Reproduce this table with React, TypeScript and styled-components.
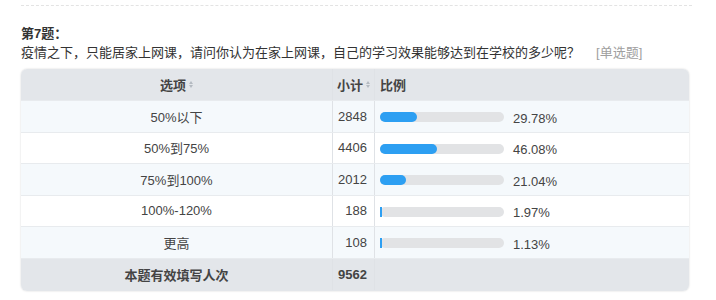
import React from "react";
import styled, { createGlobalStyle } from "styled-components";

const GlobalStyle = createGlobalStyle`
  body {
    margin: 0;
    background: #fff;
    font-family: "Liberation Sans", "Noto Sans CJK SC", sans-serif;
    color: #333;
  }
`;

const Page = styled.div`
  width: 716px;
  height: 300px;
  padding: 0 27px 0 21px;
  box-sizing: border-box;
  overflow: hidden;
`;

const Divider = styled.div`
  margin-top: 5px;
  width: 671px;
  border-top: 1px dashed #e3e3e3;
`;

const Title = styled.div`
  margin-top: 19px;
  font-size: 13px;
  font-weight: bold;
  line-height: 18px;
  color: #333;
`;

const Question = styled.div`
  font-size: 13px;
  line-height: 20px;
  color: #333;
  margin-bottom: 6px;
`;

const Kind = styled.span`
  margin-left: 16px;
  color: #a0a0a0;
`;

const Table = styled.div`
  width: 668px;
  border-radius: 6px;
  overflow: hidden;
  box-shadow: 0 0 2px rgba(0, 0, 0, 0.18);
  font-size: 13px;
`;

type Tone = "head" | "odd" | "even" | "foot";

const Row = styled.div<{ $tone: Tone }>`
  display: grid;
  grid-template-columns: 312px 42px 1fr;
  height: ${({ $tone }) => ($tone === "head" || $tone === "foot" ? "32px" : "31.5px")};
  box-sizing: border-box;
  background: ${({ $tone }) =>
    $tone === "head" || $tone === "foot"
      ? "#e3e6ea"
      : $tone === "odd"
      ? "#f5f9fc"
      : "#ffffff"};
  border-bottom: 1px solid ${({ $tone }) => ($tone === "foot" ? "transparent" : "#e8ebee")};
  font-weight: ${({ $tone }) => ($tone === "head" || $tone === "foot" ? "bold" : "normal")};
`;

const Cell = styled.div<{ $align?: "left" | "center" | "right"; $last?: boolean }>`
  display: flex;
  align-items: center;
  justify-content: ${({ $align }) =>
    $align === "right" ? "flex-end" : $align === "left" ? "flex-start" : "center"};
  padding: 0 ${({ $align }) => ($align === "right" ? "7px" : "0")} 0
    ${({ $align }) => ($align === "left" ? "5px" : "0")};
  border-right: ${({ $last }) => ($last ? "none" : "1px solid #dfe2e6")};
  color: #444;
  white-space: nowrap;
`;

const Sort = styled.span`
  display: inline-flex;
  flex-direction: column;
  margin-left: 3px;
  gap: 1px;
  &::before,
  &::after {
    content: "";
    border-left: 2px solid transparent;
    border-right: 2px solid transparent;
  }
  &::before {
    border-bottom: 3px solid #b4bac1;
  }
  &::after {
    border-top: 3px solid #b4bac1;
  }
`;

const Track = styled.div`
  width: 124px;
  height: 10px;
  border-radius: 5px;
  background: #e2e3e5;
  margin-top: 2px;
`;

const Fill = styled.div<{ $thin: boolean }>`
  height: 100%;
  border-radius: ${({ $thin }) => ($thin ? "0" : "5px")};
  background: #2d9ff2;
`;

const Percent = styled.span`
  margin-left: 9px;
  margin-top: 4px;
  color: #444;
`;

const rows = [
  { label: "50%以下", count: 2848, pct: 29.78 },
  { label: "50%到75%", count: 4406, pct: 46.08 },
  { label: "75%到100%", count: 2012, pct: 21.04 },
  { label: "100%-120%", count: 188, pct: 1.97 },
  { label: "更高", count: 108, pct: 1.13 },
];

export default function App() {
  return (
    <Page>
      <GlobalStyle />
      <Divider />
      <Title>第7题：</Title>
      <Question>
        疫情之下，只能居家上网课，请问你认为在家上网课，自己的学习效果能够达到在学校的多少呢？
        <Kind>[单选题]</Kind>
      </Question>
      <Table>
        <Row $tone="head">
          <Cell>
            选项<Sort />
          </Cell>
          <Cell>
            小计<Sort />
          </Cell>
          <Cell $align="left" $last>
            比例
          </Cell>
        </Row>
        {rows.map((r, i) => (
          <Row key={r.label} $tone={i % 2 === 0 ? "odd" : "even"}>
            <Cell>{r.label}</Cell>
            <Cell $align="right">{r.count}</Cell>
            <Cell $align="left" $last>
              <Track>
                <Fill $thin={r.pct < 5} style={{ width: r.pct < 5 ? "2px" : `${r.pct}%` }} />
              </Track>
              <Percent>{r.pct.toFixed(2)}%</Percent>
            </Cell>
          </Row>
        ))}
        <Row $tone="foot">
          <Cell>本题有效填写人次</Cell>
          <Cell $align="right">9562</Cell>
          <Cell $last />
        </Row>
      </Table>
    </Page>
  );
}
